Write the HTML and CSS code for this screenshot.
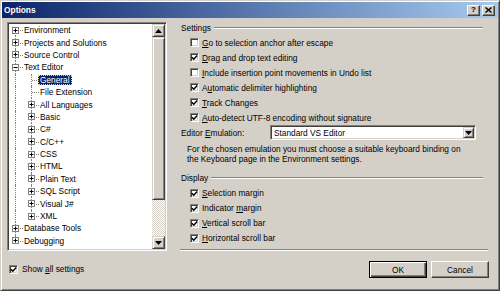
FILE: index.html
```html
<!DOCTYPE html>
<html>
<head>
    <title>Options</title>
    <link rel="stylesheet" href="styles.css">
</head>
<body>
<div class="window">
    <!-- Title bar -->
    <div class="titlebar">
        <span class="title">Options</span>
        <span class="cap-btn help">?</span>
        <span class="cap-btn close">
            <svg width="7" height="6" viewBox="0 0 7 6"><path d="M0.5 0.5L6.5 5.5M6.5 0.5L0.5 5.5" stroke="#000" stroke-width="1.4"/></svg>
        </span>
    </div>

    <div class="content">
        <!-- Category tree -->
        <div class="tree">
            <ul class="tree-list">
                <li class="node"><span class="g root first"><svg class="exp" width="7" height="7" viewBox="0 0 7 7"><rect x="0.5" y="0.5" width="6" height="6" fill="#fff" stroke="#808080"/><path d="M1.5 3.5h4M3.5 1.5v4" stroke="#000"/></svg></span><span class="label">Environment</span></li>
                <li class="node"><span class="g root tee"><svg class="exp" width="7" height="7" viewBox="0 0 7 7"><rect x="0.5" y="0.5" width="6" height="6" fill="#fff" stroke="#808080"/><path d="M1.5 3.5h4M3.5 1.5v4" stroke="#000"/></svg></span><span class="label">Projects and Solutions</span></li>
                <li class="node"><span class="g root tee"><svg class="exp" width="7" height="7" viewBox="0 0 7 7"><rect x="0.5" y="0.5" width="6" height="6" fill="#fff" stroke="#808080"/><path d="M1.5 3.5h4M3.5 1.5v4" stroke="#000"/></svg></span><span class="label">Source Control</span></li>
                <li class="node"><span class="g root tee"><svg class="exp" width="7" height="7" viewBox="0 0 7 7"><rect x="0.5" y="0.5" width="6" height="6" fill="#fff" stroke="#808080"/><path d="M1.5 3.5h4" stroke="#000"/></svg></span><span class="label">Text Editor</span></li>
                <li class="node"><span class="g root line"></span><span class="g tee"></span><span class="label selected">General</span></li>
                <li class="node"><span class="g root line"></span><span class="g tee"></span><span class="label">File Extension</span></li>
                <li class="node"><span class="g root line"></span><span class="g tee"><svg class="exp" width="7" height="7" viewBox="0 0 7 7"><rect x="0.5" y="0.5" width="6" height="6" fill="#fff" stroke="#808080"/><path d="M1.5 3.5h4M3.5 1.5v4" stroke="#000"/></svg></span><span class="label">All Languages</span></li>
                <li class="node"><span class="g root line"></span><span class="g tee"><svg class="exp" width="7" height="7" viewBox="0 0 7 7"><rect x="0.5" y="0.5" width="6" height="6" fill="#fff" stroke="#808080"/><path d="M1.5 3.5h4M3.5 1.5v4" stroke="#000"/></svg></span><span class="label">Basic</span></li>
                <li class="node"><span class="g root line"></span><span class="g tee"><svg class="exp" width="7" height="7" viewBox="0 0 7 7"><rect x="0.5" y="0.5" width="6" height="6" fill="#fff" stroke="#808080"/><path d="M1.5 3.5h4M3.5 1.5v4" stroke="#000"/></svg></span><span class="label">C#</span></li>
                <li class="node"><span class="g root line"></span><span class="g tee"><svg class="exp" width="7" height="7" viewBox="0 0 7 7"><rect x="0.5" y="0.5" width="6" height="6" fill="#fff" stroke="#808080"/><path d="M1.5 3.5h4M3.5 1.5v4" stroke="#000"/></svg></span><span class="label">C/C++</span></li>
                <li class="node"><span class="g root line"></span><span class="g tee"><svg class="exp" width="7" height="7" viewBox="0 0 7 7"><rect x="0.5" y="0.5" width="6" height="6" fill="#fff" stroke="#808080"/><path d="M1.5 3.5h4M3.5 1.5v4" stroke="#000"/></svg></span><span class="label">CSS</span></li>
                <li class="node"><span class="g root line"></span><span class="g tee"><svg class="exp" width="7" height="7" viewBox="0 0 7 7"><rect x="0.5" y="0.5" width="6" height="6" fill="#fff" stroke="#808080"/><path d="M1.5 3.5h4M3.5 1.5v4" stroke="#000"/></svg></span><span class="label">HTML</span></li>
                <li class="node"><span class="g root line"></span><span class="g tee"><svg class="exp" width="7" height="7" viewBox="0 0 7 7"><rect x="0.5" y="0.5" width="6" height="6" fill="#fff" stroke="#808080"/><path d="M1.5 3.5h4M3.5 1.5v4" stroke="#000"/></svg></span><span class="label">Plain Text</span></li>
                <li class="node"><span class="g root line"></span><span class="g tee"><svg class="exp" width="7" height="7" viewBox="0 0 7 7"><rect x="0.5" y="0.5" width="6" height="6" fill="#fff" stroke="#808080"/><path d="M1.5 3.5h4M3.5 1.5v4" stroke="#000"/></svg></span><span class="label">SQL Script</span></li>
                <li class="node"><span class="g root line"></span><span class="g tee"><svg class="exp" width="7" height="7" viewBox="0 0 7 7"><rect x="0.5" y="0.5" width="6" height="6" fill="#fff" stroke="#808080"/><path d="M1.5 3.5h4M3.5 1.5v4" stroke="#000"/></svg></span><span class="label">Visual J#</span></li>
                <li class="node"><span class="g root line"></span><span class="g end"><svg class="exp" width="7" height="7" viewBox="0 0 7 7"><rect x="0.5" y="0.5" width="6" height="6" fill="#fff" stroke="#808080"/><path d="M1.5 3.5h4M3.5 1.5v4" stroke="#000"/></svg></span><span class="label">XML</span></li>
                <li class="node"><span class="g root tee"><svg class="exp" width="7" height="7" viewBox="0 0 7 7"><rect x="0.5" y="0.5" width="6" height="6" fill="#fff" stroke="#808080"/><path d="M1.5 3.5h4M3.5 1.5v4" stroke="#000"/></svg></span><span class="label">Database Tools</span></li>
                <li class="node"><span class="g root end"><svg class="exp" width="7" height="7" viewBox="0 0 7 7"><rect x="0.5" y="0.5" width="6" height="6" fill="#fff" stroke="#808080"/><path d="M1.5 3.5h4M3.5 1.5v4" stroke="#000"/></svg></span><span class="label">Debugging</span></li>
            </ul>
            <div class="scrollbar">
                <span class="sb-btn"><svg width="7" height="4" viewBox="0 0 7 4"><path d="M3.5 0L7 4H0z" fill="#000"/></svg></span>
                <span class="sb-thumb"></span>
                <span class="sb-track"></span>
                <span class="sb-btn"><svg width="7" height="4" viewBox="0 0 7 4"><path d="M0 0H7L3.5 4z" fill="#000"/></svg></span>
            </div>
        </div>

        <!-- Settings page -->
        <div class="page">
            <div class="group-head"><span>Settings</span><span class="rule"></span></div>
            <div class="check-row"><span class="cb"></span><span><u>G</u>o to selection anchor after escape</span></div>
            <div class="check-row"><span class="cb on"><svg width="7" height="7" viewBox="0 0 7 7"><path d="M0.8 3.2L2.8 5.2L6.2 1.6" fill="none" stroke="#000" stroke-width="1.5"/></svg></span><span><u>D</u>rag and drop text editing</span></div>
            <div class="check-row"><span class="cb"></span><span><u>I</u>nclude insertion point movements in Undo list</span></div>
            <div class="check-row"><span class="cb on"><svg width="7" height="7" viewBox="0 0 7 7"><path d="M0.8 3.2L2.8 5.2L6.2 1.6" fill="none" stroke="#000" stroke-width="1.5"/></svg></span><span>A<u>u</u>tomatic delimiter highlighting</span></div>
            <div class="check-row"><span class="cb on"><svg width="7" height="7" viewBox="0 0 7 7"><path d="M0.8 3.2L2.8 5.2L6.2 1.6" fill="none" stroke="#000" stroke-width="1.5"/></svg></span><span><u>T</u>rack Changes</span></div>
            <div class="check-row"><span class="cb on"><svg width="7" height="7" viewBox="0 0 7 7"><path d="M0.8 3.2L2.8 5.2L6.2 1.6" fill="none" stroke="#000" stroke-width="1.5"/></svg></span><span><u>A</u>uto-detect UTF-8 encoding without signature</span></div>
            <div class="field-row">
                <span class="field-label">Editor <u>E</u>mulation:</span>
                <span class="combo">
                    <span class="combo-text">Standard VS Editor</span>
                    <span class="sb-btn combo-btn"><svg width="7" height="4" viewBox="0 0 7 4"><path d="M0 0H7L3.5 4z" fill="#000"/></svg></span>
                </span>
            </div>
            <p class="note">For the chosen emulation you must choose a suitable keyboard binding on<br>the Keyboard page in the Environment settings.</p>
            <div class="group-head"><span>Display</span><span class="rule"></span></div>
            <div class="check-row"><span class="cb on"><svg width="7" height="7" viewBox="0 0 7 7"><path d="M0.8 3.2L2.8 5.2L6.2 1.6" fill="none" stroke="#000" stroke-width="1.5"/></svg></span><span><u>S</u>election margin</span></div>
            <div class="check-row"><span class="cb on"><svg width="7" height="7" viewBox="0 0 7 7"><path d="M0.8 3.2L2.8 5.2L6.2 1.6" fill="none" stroke="#000" stroke-width="1.5"/></svg></span><span>Indicator <u>m</u>argin</span></div>
            <div class="check-row"><span class="cb on"><svg width="7" height="7" viewBox="0 0 7 7"><path d="M0.8 3.2L2.8 5.2L6.2 1.6" fill="none" stroke="#000" stroke-width="1.5"/></svg></span><span><u>V</u>ertical scroll bar</span></div>
            <div class="check-row"><span class="cb on"><svg width="7" height="7" viewBox="0 0 7 7"><path d="M0.8 3.2L2.8 5.2L6.2 1.6" fill="none" stroke="#000" stroke-width="1.5"/></svg></span><span><u>H</u>orizontal scroll bar</span></div>
        </div>
    </div>

    <!-- Footer -->
    <div class="footer">
        <div class="show-all"><span class="cb on"><svg width="7" height="7" viewBox="0 0 7 7"><path d="M0.8 3.2L2.8 5.2L6.2 1.6" fill="none" stroke="#000" stroke-width="1.5"/></svg></span><span>Show <u>a</u>ll settings</span></div>
        <div class="buttons">
            <span class="btn default">OK</span>
            <span class="btn">Cancel</span>
        </div>
    </div>
</div>
</body>
</html>
```

FILE: styles.css
```css
/* Classic dialog look */
body {
    margin: 0;
    font-family: "Liberation Sans", Arial, sans-serif;
    font-size: 8.3px;
    color: #000;
}

u {
    text-decoration-thickness: 1px;
    text-underline-offset: 1px;
}

.window {
    width: 500px;
    height: 291px;
    box-sizing: border-box;
    background: #d4d0c8;
    border: 1px solid;
    border-color: #d4d0c8 #404040 #404040 #d4d0c8;
    box-shadow: inset 1px 1px #fff, inset -1px -1px #808080;
    padding: 1px;
    display: flex;
    flex-direction: column;
}

/* Title bar */
.titlebar {
    height: 16px;
    flex: none;
    display: flex;
    align-items: center;
    padding: 0 3px 0 2px;
    background: linear-gradient(to right, #0a246a, #a6caf0);
}

.title {
    flex: 1;
    color: #fff;
    font-weight: bold;
    font-size: 8.4px;
}

.cap-btn {
    width: 13px;
    height: 11px;
    box-sizing: border-box;
    display: flex;
    align-items: center;
    justify-content: center;
    background: #d4d0c8;
    border: 1px solid;
    border-color: #fff #404040 #404040 #fff;
    box-shadow: inset -1px -1px #808080;
    font-weight: bold;
    font-size: 8px;
    line-height: 1;
}

.cap-btn.close {
    margin-left: 2px;
}

/* Main area */
.content {
    height: 233px;
    flex: none;
    display: flex;
    padding-left: 5px;
}

.tree {
    width: 160px;
    height: 229px;
    margin-top: 4px;
    box-sizing: border-box;
    background: #fff;
    border: 1px solid;
    border-color: #808080 #fff #fff #808080;
    box-shadow: inset 1px 1px #404040, inset -1px -1px #d4d0c8;
    padding: 1px;
    display: flex;
}

.tree-list {
    flex: 1;
    list-style: none;
    margin: 0;
    padding: 0;
    overflow: hidden;
}

.node {
    height: 12.4px;
    display: flex;
    align-items: center;
    white-space: nowrap;
}

/* Tree gutter with dotted connector lines */
.g {
    position: relative;
    width: 16px;
    flex: none;
    align-self: stretch;
    display: flex;
    align-items: center;
    padding-left: 5px;
    box-sizing: border-box;
}

.g.root {
    width: 14px;
    padding-left: 3px;
}

.g::before {
    content: "";
    position: absolute;
    left: 8px;
    top: 0;
    bottom: 0;
    border-left: 1px dotted #808080;
}

.g.root::before {
    left: 6px;
}

.g.first::before {
    top: 50%;
}

.g.end::before {
    bottom: 50%;
}

.g.tee::after,
.g.first::after,
.g.end::after {
    content: "";
    position: absolute;
    left: 9px;
    right: 0;
    top: 50%;
    border-top: 1px dotted #808080;
}

.g.root::after {
    left: 7px;
}

.exp {
    position: relative;
    z-index: 1;
    display: block;
}

.label {
    padding: 0 2px;
    margin-left: -1px;
    line-height: 10px;
}

.label.selected {
    background: #0a246a;
    color: #fff;
    outline: 1px dotted #d8d0a0;
    outline-offset: -1px;
}

/* Scroll bar */
.scrollbar {
    width: 13px;
    flex: none;
    display: flex;
    flex-direction: column;
}

.sb-btn,
.sb-thumb {
    box-sizing: border-box;
    background: #d4d0c8;
    border: 1px solid;
    border-color: #d4d0c8 #404040 #404040 #d4d0c8;
    box-shadow: inset 1px 1px #fff, inset -1px -1px #808080;
}

.sb-btn {
    height: 13px;
    flex: none;
    display: flex;
    align-items: center;
    justify-content: center;
}

.sb-thumb {
    height: 163px;
    flex: none;
}

.sb-track {
    flex: 1;
    background: repeating-conic-gradient(#fff 0 25%, #d4d0c8 0 50%) 0 0 / 2px 2px;
}

/* Settings page */
.page {
    width: 308px;
    height: 232px;
    margin-left: 13px;
    box-sizing: border-box;
    padding-top: 2px;
    border-bottom: 1px solid #808080;
    box-shadow: 0 1px #fff;
}

.group-head {
    height: 15px;
    display: flex;
    align-items: center;
    padding: 0 5px 0 1px;
}

.rule {
    flex: 1;
    margin-left: 3px;
    border-top: 1px solid #808080;
    border-bottom: 1px solid #fff;
}

.check-row {
    height: 15px;
    display: flex;
    align-items: center;
    padding-left: 10px;
}

.cb {
    width: 9px;
    height: 9px;
    flex: none;
    box-sizing: border-box;
    margin-right: 3px;
    background: #fff;
    border: 1px solid;
    border-color: #808080 #fff #fff #808080;
    box-shadow: inset 1px 1px #404040, inset -1px -1px #d4d0c8;
    display: flex;
    align-items: center;
    justify-content: center;
}

.cb svg {
    display: block;
}

.field-row {
    height: 15px;
    display: flex;
    align-items: center;
    padding-left: 1px;
}

.field-label {
    width: 89px;
}

.combo {
    width: 206px;
    height: 15px;
    box-sizing: border-box;
    background: #fff;
    border: 1px solid;
    border-color: #808080 #fff #fff #808080;
    box-shadow: inset 1px 1px #404040, inset -1px -1px #d4d0c8;
    padding: 1px;
    display: flex;
    align-items: center;
}

.combo-text {
    flex: 1;
    padding-left: 2px;
}

.combo-btn {
    width: 11px;
    height: 11px;
}

.note {
    margin: 0;
    padding: 3.5px 0 6px 7px;
    line-height: 10.5px;
}

/* Footer */
.footer {
    flex: 1;
    display: flex;
    align-items: flex-start;
    padding: 0 9px 0 7px;
}

.show-all {
    display: flex;
    align-items: center;
    margin-top: 13px;
}

.show-all .cb {
    margin-right: 4px;
}

.buttons {
    margin-left: auto;
    margin-top: 10px;
    display: flex;
    gap: 4px;
}

.btn {
    width: 58px;
    height: 17px;
    box-sizing: border-box;
    display: flex;
    align-items: center;
    justify-content: center;
    background: #d4d0c8;
    border: 1px solid;
    border-color: #fff #404040 #404040 #fff;
    box-shadow: inset -1px -1px #808080;
}

.btn.default {
    border-color: #000;
    box-shadow: inset 1px 1px #fff, inset -1px -1px #404040, inset -2px -2px #808080;
}
```
